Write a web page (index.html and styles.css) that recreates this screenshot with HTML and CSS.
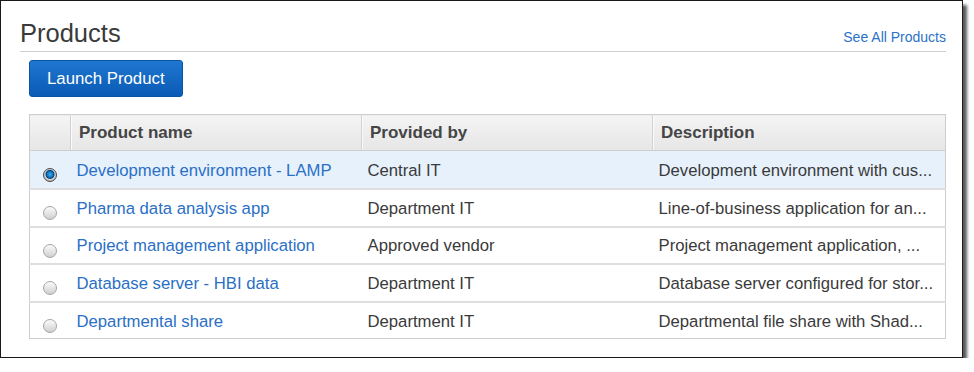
FILE: index.html
```html
<!DOCTYPE html>
<html lang="en">
<head>
  <meta charset="UTF-8">
  <link rel="stylesheet" href="styles.css">
</head>
<body>

  <div class="frame">
    <div class="section-head">
      <h1 class="section-title">Products</h1>
      <a class="see-all" href="#">See All Products</a>
    </div>

    <div class="section-body">
      <button class="launch-btn">Launch Product</button>

      <table class="product-table">
        <colgroup>
          <col class="col-pick">
          <col class="col-name">
          <col class="col-provider">
          <col class="col-desc">
        </colgroup>
        <thead>
          <tr>
            <th></th>
            <th>Product name</th>
            <th>Provided by</th>
            <th>Description</th>
          </tr>
        </thead>
        <tbody>
          <tr class="selected">
            <td class="pick"><span class="radio checked"></span></td>
            <td><a href="#">Development environment - LAMP</a></td>
            <td>Central IT</td>
            <td class="desc">Development environment with cus...</td>
          </tr>
          <tr>
            <td class="pick"><span class="radio"></span></td>
            <td><a href="#">Pharma data analysis app</a></td>
            <td>Department IT</td>
            <td class="desc">Line-of-business application for an...</td>
          </tr>
          <tr>
            <td class="pick"><span class="radio"></span></td>
            <td><a href="#">Project management application</a></td>
            <td>Approved vendor</td>
            <td class="desc">Project management application, ...</td>
          </tr>
          <tr>
            <td class="pick"><span class="radio"></span></td>
            <td><a href="#">Database server - HBI data</a></td>
            <td>Department IT</td>
            <td class="desc">Database server configured for stor...</td>
          </tr>
          <tr>
            <td class="pick"><span class="radio"></span></td>
            <td><a href="#">Departmental share</a></td>
            <td>Department IT</td>
            <td class="desc">Departmental file share with Shad...</td>
          </tr>
        </tbody>
      </table>
    </div>
  </div>

</body>
</html>
```

FILE: styles.css
```css
body {
margin: 0;
background-color: #fff;
font-family: "Liberation Sans", Arial, sans-serif;
color: #333;
}

.frame {
box-sizing: border-box;
width: 963px;
border: 1px solid #1a1a1a;
padding: 18px 16px 18px 19px;
background-color: #fff;
box-shadow: 4px 5px 3px rgba(0, 0, 0, 0.65);
}

.section-head {
display: flex;
justify-content: space-between;
align-items: baseline;
padding-bottom: 3px;
border-bottom: 1px solid #cfcfcf;
}

.section-title {
margin: 0;
font-size: 25.5px;
font-weight: normal;
line-height: 29px;
color: #3a3a3a;
}

.see-all {
font-size: 14px;
color: #2a72c8;
text-decoration: none;
}

.section-body {
padding: 8px 1px 0 9px;
}

.launch-btn {
display: block;
height: 37px;
padding: 0 17px;
border: 1px solid #0b55a8;
border-radius: 3px;
background: linear-gradient(#1f76d0, #0a5bb5);
color: #fff;
font-family: "Liberation Sans", Arial, sans-serif;
font-size: 16.8px;
}

.product-table {
width: 916px;
margin-top: 17px;
table-layout: fixed;
border-collapse: collapse;
border: 1px solid #cdcdcd;
font-size: 16.7px;
}

.col-pick { width: 41px; }
.col-name { width: 291px; }
.col-provider { width: 291px; }
.col-desc { width: 293px; }

.product-table th {
height: 35px;
padding: 0 8px 0 8px;
text-align: left;
font-size: 17px;
font-weight: bold;
color: #454545;
background: linear-gradient(#f4f4f4, #e6e6e6);
border-left: 1px solid #d2d2d2;
box-shadow: inset 1px 0 0 #fafafa;
border-bottom: 1px solid #cfcfcf;
}

.product-table th:first-child {
border-left: none;
box-shadow: none;
}

.product-table td {
height: 33.6px;
padding: 2px 8px 0 6px;
border-top: 2px solid #dedede;
white-space: nowrap;
overflow: hidden;
text-overflow: ellipsis;
color: #3a3a3a;
}

.product-table tbody tr:first-child td {
border-top: none;
height: 35px;
}

.product-table tr.selected td {
background-color: #e6f1fc;
}

.product-table a {
color: #2a6fc6;
text-decoration: none;
}

.product-table td.pick {
padding: 2px 0 0;
text-align: center;
}

.radio {
display: inline-block;
box-sizing: border-box;
width: 14px;
height: 14px;
margin-top: 9px;
border: 1px solid #a6a6a6;
border-radius: 50%;
background: linear-gradient(#fbfbfb, #cfcfcf);
vertical-align: middle;
}

.radio.checked {
border: 1px solid #4d4d4d;
background: radial-gradient(circle at 50% 45%, #3fb0f0 0, #0b72c0 3px, #0a3f78 4px, #d8d8d8 5px, #a8a8a8 7px);
}
```
